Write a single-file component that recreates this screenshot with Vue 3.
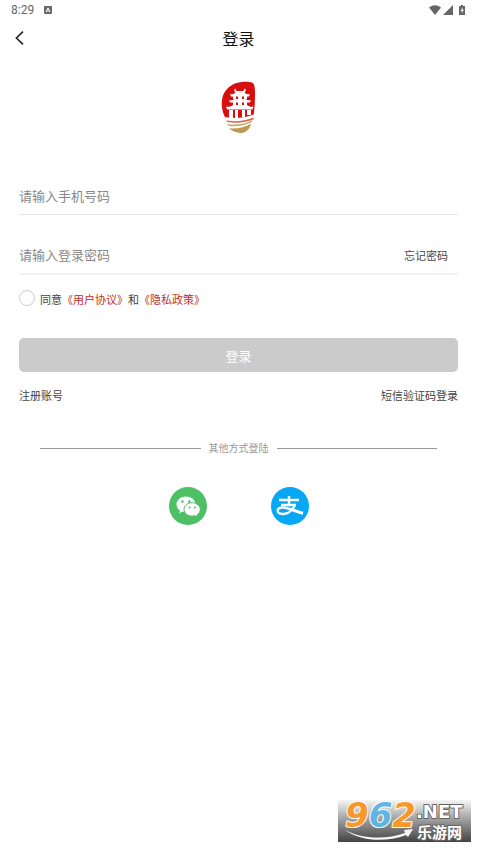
<template>
  <div class="page">
    <!-- Status bar -->
    <div class="status-bar">
      <div class="status-left">
        <span>8:29</span>
        <svg width="8" height="8" viewBox="0 0 8 8">
          <rect width="8" height="8" rx="1" fill="#666" />
          <path d="M2 6.2 4 1.8 6 6.2M2.8 4.8h2.4" fill="none" stroke="#fff" />
        </svg>
      </div>
      <div class="status-right">
        <svg width="12" height="10" viewBox="0 0 12 10">
          <path d="M0 2.400Q6-2 12 2.400L6 10Z" fill="#666" />
        </svg>
        <svg width="10" height="10" viewBox="0 0 10 10">
          <path d="M10 0v10H0Z" fill="#666" />
        </svg>
        <svg class="battery" width="6" height="10" viewBox="0 0 6 10">
          <path d="M2 0h2v1h2v9H0V1h2Z" fill="#666" />
          <path d="M3.600 2.400 1.500 5.800h1.300v2.400l2-3.400H3.600Z" fill="#fff" />
        </svg>
      </div>
    </div>

    <!-- Header -->
    <header class="header">
      <button class="back" type="button" aria-label="返回">
        <svg width="9" height="14" viewBox="0 0 9 14">
          <path d="M8 .7 1.400 7 8 13.300" fill="none" stroke="#222" stroke-width="1.600" />
        </svg>
      </button>
      <h1>登录</h1>
    </header>

    <main class="content">
      <svg class="logo" width="36" height="54" viewBox="0 0 36 54">
        <path
          d="M14 3.500C19 1.500 27 1 31 2.500c2.500 1 3 5 3 10.500 0 9-.5 18-1.500 23-9 4-19 5-27 4C2 34 0 27 1 20 2 12 7 6.500 14 3.500Z"
          fill="#d7100f"
        />
        <g fill="#fff">
          <path d="M14.500 8.500c0 2 1 2.500 2.500 2.500h4c1.500 0 2.500-.5 2.500-2.500l1.500 1-1.500 4h-9l-1.500-4Z" />
          <path d="M9 14c2 .7 3.500 0 5-1h10c1.500 1 3 1.700 5 1l-1 2.500H10Z" />
          <path d="M12 16h3v3h-3zM17 16h4v3h-4zM23 16h3v3h-3z" />
          <path d="M8 20c2 .7 4 0 5.500-1h11c1.500 1 3.500 1.700 5.500 1l-1 2.500H9Z" />
          <path d="M12 22h3v3h-3zM17 22h4v3h-4zM23 22h3v3h-3z" />
          <path d="M5 26.500c3 .7 5 0 7-1.500h14c2 1.500 4 2.200 6.500 1.500l-1 3H6Z" />
          <path d="M8 30h4v8H8zM14 30h3v8h-3zM21 30h3v7h-3zM26 30h4v5h-4z" />
          <path d="M4 37c10 2 20 1 30-3v3c-9 4-19 5-29 3Z" />
        </g>
        <path d="M5 40.500c10 1.500 19 .5 28-3l-.5 2c-8 3-17 4-26 2.500Z" fill="#dc6044" />
        <path d="M6 44c10 1.500 18 0 25.500-4l-.7 2C24 45.500 16 47 8 46Z" fill="#c8a86b" />
        <path d="M8 48.500c9 .5 16-1 22-5-1 5-4 8.500-9 9.500-5 0-10-2-13-4.500Z" fill="#bd9951" />
      </svg>

      <form @submit.prevent>
        <div class="field">
          <input v-model="phone" type="tel" placeholder="请输入手机号码" aria-label="请输入手机号码" />
        </div>
        <div class="field password">
          <input
            v-model="password"
            type="password"
            placeholder="请输入登录密码"
            aria-label="请输入登录密码"
          />
          <a class="forgot" href="#">忘记密码</a>
        </div>

        <div class="agreement">
          <input id="agree" v-model="agreed" type="checkbox" />
          <div class="terms">
            <label for="agree">同意</label>
            <a href="#">《用户协议》</a>
            <span>和</span>
            <a href="#">《隐私政策》</a>
          </div>
        </div>

        <button class="submit" type="submit">登录</button>
      </form>

      <div class="links">
        <a href="#">注册账号</a>
        <a href="#">短信验证码登录</a>
      </div>

      <div class="divider"><span>其他方式登陆</span></div>

      <div class="socials">
        <button type="button" aria-label="微信">
          <svg width="38" height="38" viewBox="0 0 38 38">
            <circle cx="19" cy="19" r="19" fill="#4dbf64" />
            <path
              d="M17 9.500c-5.300 0-9.500 3.500-9.500 7.900 0 2.500 1.400 4.700 3.500 6.100l-.8 2.700 3.200-1.600c1.100.4 2.300.6 3.600.6 5.300 0 9.500-3.500 9.500-7.800S22.300 9.500 17 9.500Z"
              fill="#fff"
            />
            <path
              d="M23.200 15.700c-4.600 0-8.200 3-8.200 6.700s3.600 6.700 8.200 6.700c1 0 2-.2 2.900-.4l2.700 1.400-.7-2.300c2-1.200 3.200-3.200 3.200-5.400 0-3.700-3.600-6.700-8.100-6.700Z"
              fill="#fff"
              stroke="#4dbf64"
            />
            <g fill="#4dbf64">
              <circle cx="13.500" cy="14.500" r="1.200" />
              <circle cx="20.300" cy="14.500" r="1.200" />
              <circle cx="20.500" cy="20.500" r="1" />
              <circle cx="26" cy="20.500" r="1" />
            </g>
          </svg>
        </button>
        <button type="button" aria-label="支付宝">
          <svg width="38" height="38" viewBox="0 0 38 38">
            <circle cx="19" cy="19" r="19" fill="#06a7f5" />
            <g fill="none" stroke="#fff">
              <path d="M8 13h20M18 9v9M10 18h15" stroke-width="2.400" />
              <path
                d="M24 17.500c-1.500 4-5.500 9.500-11.500 9.500-3.500 0-5.800-1.200-5.800-3.300 0-2 2-3.200 5-3.200 5.300 0 12.500 3.300 20 5.800"
                stroke-width="2.300"
              />
              <path d="M21 22.700c3 1.300 6 2.500 11 3.600" stroke-width="3" />
            </g>
          </svg>
        </button>
      </div>
    </main>

    <!-- Site badge -->
    <svg class="badge" width="133" height="50" viewBox="0 0 133 50">
      <defs>
        <linearGradient id="badge-bg" x1="0" y1="0" x2="0" y2="1">
          <stop offset="0" stop-color="#f6f6f6" />
          <stop offset="0.5" stop-color="#999" />
          <stop offset="1" stop-color="#434343" />
        </linearGradient>
      </defs>
      <rect y="8" width="133" height="42" fill="url(#badge-bg)" />
      <path d="M7 38c17 9 40 10 60 3l-1-3 9-1-5 8-2-2C47 51 22 49 7 38Z" fill="#f5f5f5" />
      <text class="badge-number" x="7" y="35">
        <tspan fill="#f8982a">9</tspan><tspan fill="#61b5e5">6</tspan><tspan fill="#f8982a">2</tspan>
      </text>
      <text class="badge-net" x="78" y="26">.NET</text>
      <text class="badge-name" x="79" y="46">乐游网</text>
    </svg>
  </div>
</template>

<script setup>
import { ref } from "vue";

const phone = ref("");
const password = ref("");
const agreed = ref(false);
</script>

<style>
body {
  margin: 0;
  background: #fff;
}
</style>

<style scoped>
.page {
  display: flex;
  flex-direction: column;
  box-sizing: border-box;
  min-height: 100vh;
  padding-bottom: 6px;
  font-family: "Noto Sans CJK SC", sans-serif;
  font-size: 11px;
  line-height: 16px;
  color: #444;
}

svg {
  display: block;
  flex: none;
}

a {
  color: inherit;
  text-decoration: none;
}

button,
input {
  margin: 0;
  padding: 0;
  border: none;
  background: none;
  font-family: inherit;
}

button {
  cursor: pointer;
}

/* Status bar */
.status-bar {
  display: flex;
  align-items: center;
  justify-content: space-between;
  height: 20px;
  padding: 0 12px 0 11px;
  font-family: Roboto, sans-serif;
  font-size: 12px;
  color: #666;
}

.status-left,
.status-right {
  display: flex;
  align-items: center;
}

.status-left {
  gap: 10px;
}

.status-right {
  gap: 2px;
}

.battery {
  margin-left: 4px;
}

/* Header */
.header {
  display: grid;
  grid-template-columns: 40px 1fr 40px;
  align-items: center;
  height: 36px;
}

.back {
  display: flex;
  align-items: center;
  height: 36px;
  padding-left: 15px;
}

h1 {
  margin: 0;
  font-size: 16px;
  font-weight: 400;
  line-height: 24px;
  text-align: center;
  color: #111;
}

.content {
  padding: 24px 19px;
}

.logo {
  margin: 0 auto 44px;
}

/* Form */
.field {
  display: flex;
  align-items: center;
  height: 36px;
  border-bottom: 1px solid #e6e6e6;
}

.field input {
  flex: 1;
  min-width: 0;
  height: 32px;
  padding-bottom: 2px;
  box-sizing: border-box;
  outline: none;
  font-size: 13px;
  color: #333;
}

.field input::placeholder {
  color: #888;
  opacity: 1;
}

.password {
  margin-top: 22px;
  border-bottom: 2px solid #f2f2f2;
}

.forgot {
  margin-right: 10px;
}

.agreement {
  display: flex;
  align-items: flex-start;
  gap: 5px;
  margin-top: 15px;
}

.agreement input {
  appearance: none;
  box-sizing: border-box;
  width: 16px;
  height: 16px;
  border: 1px solid #ccc;
  border-radius: 50%;
}

.agreement input:checked {
  background: #c0302b;
}

.terms {
  display: flex;
  padding-top: 1px;
}

.terms a {
  color: #c0302b;
}

.submit {
  width: 100%;
  height: 34px;
  margin-top: 31px;
  border-radius: 5px;
  background: #cbcbcb;
  font-size: 13px;
  color: #fff;
}

.links {
  display: flex;
  justify-content: space-between;
  margin-top: 15px;
}

/* Other login methods */
.divider {
  display: flex;
  align-items: center;
  gap: 8px;
  margin: 37px 21px 0;
  font-size: 10px;
  color: #999;
}

.divider::before,
.divider::after {
  content: "";
  flex: 1;
  height: 1px;
  background: #999;
}

.socials {
  display: flex;
  justify-content: center;
  gap: 64px;
  margin-top: 31px;
}

/* Site badge */
.badge {
  align-self: flex-end;
  margin-top: auto;
  margin-right: 6px;
}

.badge text {
  font-family: "DejaVu Sans", "Noto Sans CJK SC", sans-serif;
  font-weight: 700;
  stroke-linejoin: round;
  paint-order: stroke;
}

.badge .badge-number {
  font-size: 34px;
  font-style: italic;
  stroke: #fff;
  stroke-width: 2px;
}

.badge-net,
.badge-name {
  fill: #fff;
  stroke: #666;
  stroke-width: 2px;
}

.badge-net {
  font-size: 18px;
}

.badge .badge-name {
  font-family: "Noto Sans CJK SC", sans-serif;
  font-size: 15px;
}
</style>
